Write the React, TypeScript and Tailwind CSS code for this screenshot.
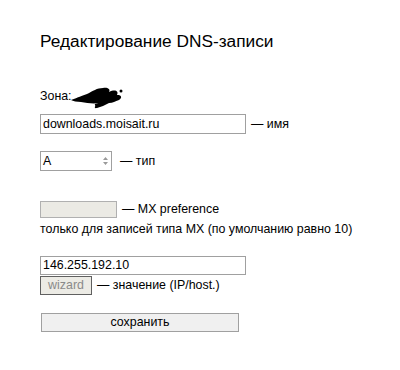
export default function App() {
  return (
    <div className="w-[400px] h-[370px] bg-white pl-10 pt-[30px] text-[12.4px] text-black font-['Liberation_Sans',Arial,sans-serif]">
      <h1 className="text-[17.3px] leading-[22px] mb-[36px]">Редактирование DNS-записи</h1>

      <div className="flex items-center h-[16px] mb-[10px]">
        <span>Зона:</span>
        <svg width="56" height="24" viewBox="0 0 56 24" className="-ml-[3px] mt-[3px]">
          <path
            d="M2 14 C8 12 12 10 18 8 C24 5 28 2 34 2 C38 1 42 3 40 6 C46 3 50 5 48 9 C52 9 54 11 50 14 C46 15 44 17 40 17 C36 19 32 21 28 22 C24 23 26 19 30 17 C24 18 18 17 12 16 C8 16 4 15 2 14 Z"
            fill="black"
          />
          <path
            d="M8 13 C16 11 26 10 36 8 M14 15 C24 13 34 12 44 10 M26 19 C34 17 40 16 48 12"
            stroke="black"
            strokeWidth="2"
            fill="none"
          />
          <circle cx="52" cy="5" r="1.5" fill="black" />
        </svg>
      </div>

      <div className="flex items-center gap-[5px]">
        <input
          defaultValue="downloads.moisait.ru"
          className="w-[206px] h-[20px] border border-[#a0a0a0] px-[2px] text-[12.4px] outline-none"
        />
        <span>— имя</span>
      </div>

      <div className="flex items-center gap-[8px] mt-[17px]">
        <div className="w-[72px] h-[20px] border border-[#a0a0a0] flex items-center justify-between px-[2px]">
          <span>A</span>
          <svg width="7" height="10" viewBox="0 0 7 10">
            <path d="M1 4 L3.5 1 L6 4 Z M1 6 L3.5 9 L6 6 Z" fill="#9a9a9a" />
          </svg>
        </div>
        <span>— тип</span>
      </div>

      <div className="flex items-center gap-[5px] mt-[29px]">
        <input
          disabled
          className="w-[77px] h-[17px] border border-[#b0b0b0] bg-[#ebeae4]"
        />
        <span>— MX preference</span>
      </div>
      <div className="leading-[16px] mt-[2px]">только для записей типа MX (по умолчанию равно 10)</div>

      <div className="mt-[19px]">
        <input
          defaultValue="146.255.192.10"
          className="w-[206px] h-[19px] border border-[#a0a0a0] px-[2px] text-[12.4px] outline-none"
        />
      </div>
      <div className="flex items-center gap-[5px] mt-[1px]">
        <button className="w-[52px] h-[19px] border border-[#606060] bg-[#ecebe5] text-[#8a8a8a] text-[12.4px] leading-none">
          wizard
        </button>
        <span>— значение (IP/host.)</span>
      </div>

      <button className="mt-[18px] ml-[1px] w-[198px] h-[19px] border border-[#a0a0a0] bg-[#f0f0f0] text-[12.4px] leading-none">
        сохранить
      </button>
    </div>
  );
}
